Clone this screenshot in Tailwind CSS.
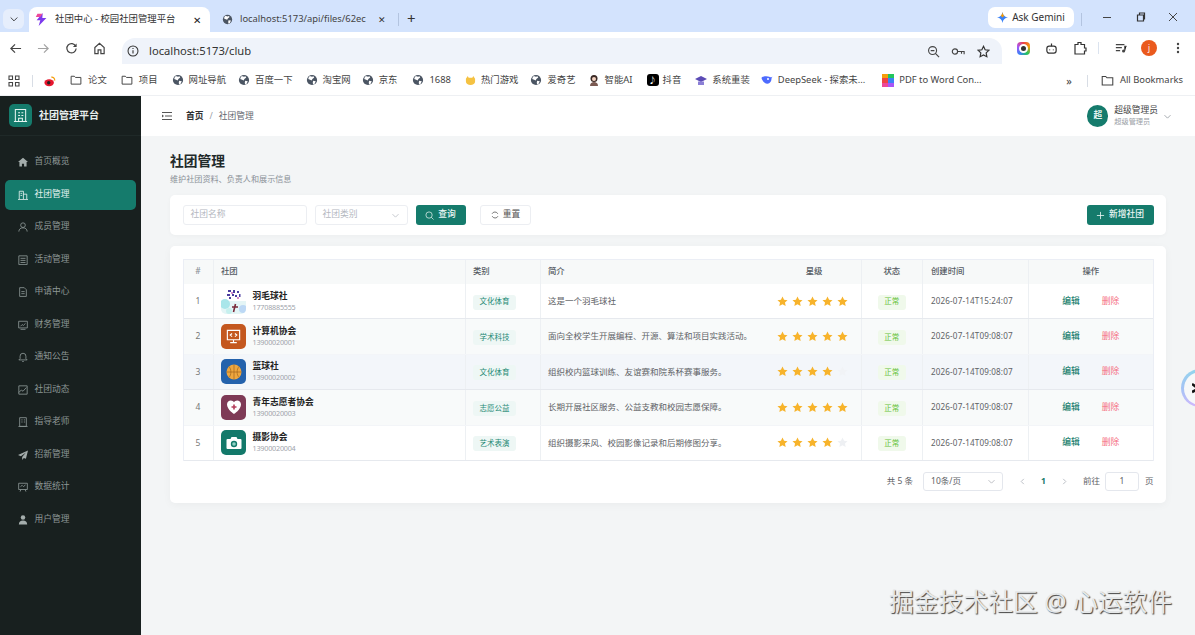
<!DOCTYPE html>
<html lang="zh">
<head>
<meta charset="utf-8">
<title>社团中心 - 校园社团管理平台</title>
<script src="https://cdn.jsdelivr.net/npm/@tailwindcss/browser@4"></script>
</head>
<body class="m-0 bg-white">
<svg class="hidden" xmlns="http://www.w3.org/2000/svg">
  <symbol id="star" viewBox="0 0 24 24"><path fill="currentColor" d="M12 1l3.400 7 7.600 1-5.600 5.300 1.500 7.700-6.900-3.800-6.900 3.800 1.500-7.700L1 9l7.600-1z"/></symbol>
  <symbol id="globe" viewBox="0 0 16 16"><circle cx="8" cy="8" r="6.800" fill="#4b5563"/><path fill="#fff" d="M5 2.500l3 1 2-.5 1 1.500-2.500 2-1 2-2-1-2.500-1 .5-2zM9.500 9l3.500.5-1.500 3.500-2 1-.5-2.500z"/></symbol>
  <symbol id="folder" viewBox="0 0 16 16"><path fill="none" stroke="#444" stroke-width="1.300" d="M1.500 3h4.300l1.500 1.600h7.200v8.900h-13z"/></symbol>
  <symbol id="chev" viewBox="0 0 12 12"><path fill="none" stroke="currentColor" stroke-width="1" d="M2 4.200l4 4 4-4"/></symbol>
</svg>
<div class="relative flex h-[635px] w-[1195px] flex-col overflow-hidden font-['Noto_Sans','Noto_Sans_CJK_SC',sans-serif]">

  <!-- tab strip -->
  <div class="flex h-[32px] shrink-0 items-end bg-[#d3e3fd] pl-[3px] text-[9.400px] text-[#333]">
    <div class="mb-[3px] flex h-[20px] w-[21px] items-center justify-center rounded-[6px] bg-[#e6eefc] text-[#222]"><svg class="h-[10px] w-[10px]"><use href="#chev"/></svg></div>
    <div class="ml-[5px] flex h-[25px] w-[181px] items-center rounded-t-[8px] bg-white pl-[6px] pr-[9px]">
      <svg class="h-[13px] w-[13px] shrink-0" viewBox="0 0 16 16"><path fill="#7c3aed" d="M9.500 0L2 9h4.500L4.500 16 14 6H9z"/><path fill="#ec4899" d="M3 1h6L6.500 5H1z"/></svg>
      <span class="ml-[7px] flex-1 whitespace-nowrap">社团中心 - 校园社团管理平台</span>
      <span class="ml-[4px] text-[10px] leading-none text-[#222]">✕</span>
    </div>
    <div class="flex h-[25px] w-[188px] items-center pl-[12px]">
      <svg class="h-[11px] w-[11px] shrink-0" viewBox="0 0 16 16"><use href="#globe"/></svg>
      <span class="ml-[7px] w-[128px] overflow-hidden whitespace-nowrap text-[#444]">localhost:5173/api/files/62ec</span>
      <span class="ml-[10px] text-[9px] leading-none text-[#333]">✕</span>
    </div>
    <div class="mb-[6px] h-[13px] w-px bg-[#b3c4e0]"></div>
    <div class="mb-[4px] ml-[8px] text-[15px] leading-[20px] text-[#333]">+</div>
    <div class="mb-[4px] ml-auto flex h-[21px] w-[86px] items-center justify-center rounded-[7px] bg-white text-[10px] text-[#333]">
      <svg class="mr-[4px] h-[11px] w-[11px]" viewBox="0 0 16 16"><path fill="#3b82f6" d="M8 0c.6 4.600 3.400 7.400 8 8-4.600.6-7.400 3.400-8 8-.6-4.600-3.400-7.400-8-8 4.600-.6 7.400-3.400 8-8z"/><path fill="#f59e0b" d="M8 0c.3 2.500 1 4 2.500 5.500L8 8 5.500 5.500C7 4 7.700 2.500 8 0z"/></svg>Ask Gemini
    </div>
    <div class="mb-[6px] ml-[7px] h-[13px] w-px bg-[#b3c4e0]"></div>
    <div class="mb-[5px] flex h-[20px] w-[113px] items-center text-[#444]">
      <svg class="ml-[20px] h-[10px] w-[10px]" viewBox="0 0 10 10"><path stroke="#444" d="M1 5.500h8"/></svg>
      <svg class="ml-[24px] h-[10px] w-[10px]" viewBox="0 0 10 10"><path fill="none" stroke="#333" stroke-width="1.200" d="M1.500 3h6v6h-6zM3.500 3V1h5v6H7.500"/></svg>
      <svg class="ml-[22px] h-[10px] w-[10px]" viewBox="0 0 10 10"><path stroke="#444" d="M1 1l8 8M9 1l-8 8"/></svg>
    </div>
  </div>

  <!-- toolbar -->
  <div class="flex h-[32px] shrink-0 items-center bg-white pl-[9px]">
    <svg class="h-[13px] w-[13px]" viewBox="0 0 14 14"><path fill="none" stroke="#444" stroke-width="1.300" d="M13 7H2M6.500 2.500L2 7l4.500 4.500"/></svg>
    <svg class="ml-[15px] h-[13px] w-[13px]" viewBox="0 0 14 14"><path fill="none" stroke="#a3a3a3" stroke-width="1.300" d="M1 7h11M7.500 2.500L12 7l-4.500 4.500"/></svg>
    <svg class="ml-[15px] h-[13px] w-[13px]" viewBox="0 0 14 14"><path fill="none" stroke="#444" stroke-width="1.300" d="M11.500 4.500A5 5 0 1 0 12 7"/><path fill="#444" d="M12.500 1.500v4h-4z"/></svg>
    <svg class="ml-[15px] h-[13px] w-[13px]" viewBox="0 0 14 14"><path fill="none" stroke="#444" stroke-width="1.300" d="M2 6l5-4.500L12 6v6.500H8.500V8.500h-3v4H2z"/></svg>
    <div class="ml-[16px] flex h-[26px] w-[880px] items-center self-end rounded-t-[13px] bg-[#eff3fa] pl-[5px] pr-[12px] text-[11.200px] text-[#333]">
      <svg class="h-[12px] w-[12px]" viewBox="0 0 14 14"><circle cx="7" cy="7" r="5.800" fill="none" stroke="#333" stroke-width="1.200"/><path stroke="#333" stroke-width="1.300" d="M7 6v4M7 3.500v1.300"/></svg>
      <span class="ml-[10px]">localhost:5173/club</span>
      <svg class="ml-auto h-[13px] w-[13px]" viewBox="0 0 14 14"><circle cx="6" cy="6" r="4.300" fill="none" stroke="#444" stroke-width="1.200"/><path stroke="#444" stroke-width="1.300" d="M9 9l4 4M4 6h4"/></svg>
      <svg class="ml-[11px] h-[13px] w-[14px]" viewBox="0 0 16 14"><circle cx="4.500" cy="7" r="3" fill="none" stroke="#444" stroke-width="1.300"/><path fill="none" stroke="#444" stroke-width="1.300" d="M7.500 7H15v3M12 7v2.500"/></svg>
      <svg class="ml-[12px] h-[13px] w-[13px]" viewBox="0 0 24 24"><path fill="none" stroke="#333" stroke-width="2.200" d="M12 2.500l3 6.400 7 .9-5.100 4.800 1.300 7-6.200-3.400-6.200 3.400 1.300-7L2 9.800l7-.9z"/></svg>
    </div>
    <div class="ml-[15px] h-[13px] w-[13px] rounded-[4px] bg-[conic-gradient(#ef4444,#f59e0b,#22c55e,#3b82f6,#a855f7,#ef4444)] p-[2px]"><div class="h-full w-full rounded-full border-[2px] border-white bg-[#333]"></div></div>
    <svg class="ml-[15px] h-[13px] w-[13px]" viewBox="0 0 14 14"><rect x="2" y="4.500" width="10" height="7.500" rx="2.500" fill="none" stroke="#333" stroke-width="1.300"/><path stroke="#333" stroke-width="1.300" d="M7 1.500v3M5 8v1M9 8v1"/></svg>
    <svg class="ml-[15px] h-[14px] w-[14px]" viewBox="0 0 14 14"><path fill="none" stroke="#333" stroke-width="1.200" d="M2 3.500h3V1.500h3v2h3.500V7h1.500v3h-1.500v3H2z"/></svg>
    <div class="ml-[11px] h-[12px] w-px bg-[#dbe3ef]"></div>
    <svg class="ml-[16px] h-[12px] w-[12px]" viewBox="0 0 14 14"><path stroke="#444" stroke-width="1.300" d="M1 3h10M1 6.500h7M1 10h5"/><circle cx="10" cy="10.500" r="1.800" fill="#444"/><path stroke="#444" stroke-width="1.200" d="M11.400 10.500V5h2"/></svg>
    <div class="ml-[14px] flex h-[16px] w-[16px] items-center justify-center rounded-full bg-[#ea5a1e] text-[8px] leading-none text-white">j</div>
    <svg class="ml-[19px] h-[12px] w-[4px]" viewBox="0 0 4 12"><circle cx="2" cy="2" r="1.200" fill="#444"/><circle cx="2" cy="6" r="1.200" fill="#444"/><circle cx="2" cy="10" r="1.200" fill="#444"/></svg>
  </div>

  <!-- bookmarks -->
  <div class="flex h-[32px] shrink-0 items-center border-b border-[#eef0f3] bg-white pt-[2px] pl-[8px] text-[9.400px] text-[#444]">
    <svg class="h-[12px] w-[12px]" viewBox="0 0 12 12"><path fill="none" stroke="#444" stroke-width="1.100" d="M1 1h3.500v3.500H1zM7.500 1H11v3.500H7.500zM1 7.500h3.500V11H1zM7.500 7.500H11V11H7.500z"/></svg>
    <div class="ml-[12px] h-[12px] w-px bg-[#d8dde5]"></div>
    <svg class="ml-[11px] h-[12px] w-[12px]" viewBox="0 0 14 14"><ellipse cx="6" cy="9" rx="5.500" ry="4" fill="#e6162d"/><circle cx="5.500" cy="9" r="2" fill="#222"/><path fill="none" stroke="#f59e0b" stroke-width="1.300" d="M8.500 2.500a3.500 3.500 0 0 1 4 4"/></svg>
    <div class="ml-[14px] flex items-center gap-[6px]"><svg class="h-[12px] w-[12px]"><use href="#folder"/></svg>论文</div>
    <div class="ml-[14px] flex items-center gap-[6px]"><svg class="h-[12px] w-[12px]"><use href="#folder"/></svg>项目</div>
    <div class="ml-[14px] flex items-center gap-[5px]"><svg class="h-[12px] w-[12px]"><use href="#globe"/></svg>网址导航</div>
    <div class="ml-[12px] flex items-center gap-[5px]"><svg class="h-[12px] w-[12px]"><use href="#globe"/></svg>百度一下</div>
    <div class="ml-[13px] flex items-center gap-[5px]"><svg class="h-[12px] w-[12px]"><use href="#globe"/></svg>淘宝网</div>
    <div class="ml-[11px] flex items-center gap-[5px]"><svg class="h-[12px] w-[12px]"><use href="#globe"/></svg>京东</div>
    <div class="ml-[15px] flex items-center gap-[5px]"><svg class="h-[12px] w-[12px]"><use href="#globe"/></svg>1688</div>
    <div class="ml-[14px] flex items-center gap-[5px]"><svg class="h-[11px] w-[11px]" viewBox="0 0 12 12"><path fill="#f5c242" d="M1 4l2-3 1 2h4l1-2 2 3v3a5 4 0 0 1-10 0z"/></svg>热门游戏</div>
    <div class="ml-[12px] flex items-center gap-[5px]"><svg class="h-[12px] w-[12px]"><use href="#globe"/></svg>爱奇艺</div>
    <div class="ml-[12px] flex items-center gap-[5px]"><svg class="h-[12px] w-[12px]" viewBox="0 0 12 12"><circle cx="6" cy="4.500" r="3.500" fill="#3b2a25"/><circle cx="6" cy="5" r="2" fill="#f3d2c1"/><path fill="#7b5a52" d="M2 12c0-3 2-4 4-4s4 1 4 4z"/></svg>智能AI</div>
    <div class="ml-[14px] flex items-center gap-[4px]"><div class="flex h-[12px] w-[12px] items-center justify-center rounded-[3px] bg-black text-[8px] leading-none text-white">♪</div>抖音</div>
    <div class="ml-[14px] flex items-center gap-[5px]"><svg class="h-[12px] w-[12px]" viewBox="0 0 12 12"><path fill="#5b4bb5" d="M6 2l6 3-6 3-6-3z"/><path fill="#8b7fd6" d="M3 7.500h6V11H3z"/></svg>系统重装</div>
    <div class="ml-[11px] flex items-center gap-[5px]"><svg class="h-[12px] w-[12px]" viewBox="0 0 12 12"><path fill="#4d6bfe" d="M11.500 2.500c-1 1-1.500 1-2.500.5C6 1.500 1.500 2 .5 4c1 4 5 7 8 5 1.500-1 2-3 2-4.500z"/><circle cx="7" cy="5" r="1" fill="#fff"/></svg>DeepSeek - 探索未...</div>
    <div class="ml-[17px] flex items-center gap-[5px]"><div class="grid h-[13px] w-[12px] grid-cols-2"><div class="bg-[#f59e0b]"></div><div class="bg-[#22c55e]"></div><div class="bg-[#ef4444]"></div><div class="bg-[#3b82f6]"></div><div class="bg-[#ec4899]"></div><div class="bg-[#a855f7]"></div></div>PDF to Word Con...</div>
    <div class="ml-auto text-[11px] leading-none">»</div>
    <div class="ml-[15px] h-[12px] w-px bg-[#d8dde5]"></div>
    <div class="ml-[13px] mr-[12px] flex items-center gap-[6px]"><svg class="h-[13px] w-[13px]"><use href="#folder"/></svg>All Bookmarks</div>
  </div>

  <!-- app -->
  <div class="flex min-h-0 flex-1">
    <aside class="flex w-[141px] shrink-0 flex-col bg-[#18201f] text-[8.750px] text-[#8d9796]">
      <div class="flex h-[40px] shrink-0 items-center border-b border-[#1f2928] pl-[9px]">
        <div class="flex h-[23px] w-[23px] items-center justify-center rounded-[5px] bg-[#157b6c]">
          <svg class="h-[15px] w-[15px]" viewBox="0 0 16 16"><path fill="none" stroke="#e6f5f2" stroke-width="1.100" d="M2.500 1.500h11v13h-11zM1 14.500h14M5.500 5h2M9 5h2M5.500 8h2M9 8h2M6 14.500v-3.500h4v3.500"/></svg>
        </div>
        <span class="ml-[7px] text-[10px] font-bold text-[#e8eeed]">社团管理平台</span>
      </div>
      <nav class="flex flex-col gap-[2.500px] px-[5px] pt-[11px]">
        <a class="flex h-[30px] items-center gap-[6.500px] rounded-[5px] pl-[13px]"><svg class="h-[10px] w-[10px]" viewBox="0 0 12 12"><path fill="#a4adac" d="M6 .8L12 6h-1.700v5.500H7.300V8H4.700v3.500H1.700V6H0z"/></svg>首页概览</a>
        <a class="flex h-[30px] items-center gap-[6.500px] rounded-[5px] bg-[#157b6c] pl-[13px] text-[#e7f3f1]"><svg class="h-[10px] w-[10px]" viewBox="0 0 12 12"><path fill="none" stroke="currentColor" d="M1.500 11V1.500h5V11M6.500 5h4v6M0 11.500h12M3 4h2M3 6.500h2"/></svg>社团管理</a>
        <a class="flex h-[30px] items-center gap-[6.500px] rounded-[5px] pl-[13px]"><svg class="h-[10px] w-[10px]" viewBox="0 0 12 12"><circle cx="6" cy="3.800" r="2.800" fill="none" stroke="currentColor"/><path fill="none" stroke="currentColor" d="M1 11.500c0-3 2.200-4.500 5-4.500s5 1.500 5 4.500"/></svg>成员管理</a>
        <a class="flex h-[30px] items-center gap-[6.500px] rounded-[5px] pl-[13px]"><svg class="h-[10px] w-[10px]" viewBox="0 0 12 12"><path fill="none" stroke="currentColor" d="M1 1h10v10.500H1zM3 4h6M3 6.500h6M3 9h6"/></svg>活动管理</a>
        <a class="flex h-[30px] items-center gap-[6.500px] rounded-[5px] pl-[13px]"><svg class="h-[10px] w-[10px]" viewBox="0 0 12 12"><path fill="none" stroke="currentColor" d="M2 .8h5.500L10 3.300v8H2zM4 5.500h4M4 8h4"/></svg>申请中心</a>
        <a class="flex h-[30px] items-center gap-[6.500px] rounded-[5px] pl-[13px]"><svg class="h-[10px] w-[10px]" viewBox="0 0 12 12"><path fill="none" stroke="currentColor" d="M.8 1.500h10.400v8H.8zM3 11.200h6M3 7.500l2-2 1.500 1L9 4"/></svg>财务管理</a>
        <a class="flex h-[30px] items-center gap-[6.500px] rounded-[5px] pl-[13px]"><svg class="h-[10px] w-[10px]" viewBox="0 0 12 12"><path fill="none" stroke="currentColor" d="M1 9.500h10L9.500 8V5a3.500 3.500 0 0 0-7 0v3zM5 11.500h2"/></svg>通知公告</a>
        <a class="flex h-[30px] items-center gap-[6.500px] rounded-[5px] pl-[13px]"><svg class="h-[10px] w-[10px]" viewBox="0 0 12 12"><path fill="none" stroke="currentColor" d="M1 1h10v10H1zM1 9l3-3 2 1.500L10 3"/></svg>社团动态</a>
        <a class="flex h-[30px] items-center gap-[6.500px] rounded-[5px] pl-[13px]"><svg class="h-[10px] w-[10px]" viewBox="0 0 12 12"><path fill="none" stroke="currentColor" d="M2 .8h8v10.400H2zM.5 11.500h11M4 3.500h1.500M7 3.500h1.500M4 6h1.500M7 6h1.500"/></svg>指导老师</a>
        <a class="flex h-[30px] items-center gap-[6.500px] rounded-[5px] pl-[13px]"><svg class="h-[10px] w-[10px]" viewBox="0 0 12 12"><path fill="#a4adac" d="M12 .5L0 6l3.500 1.500L9.500 3 5 8.500V12l2-2.500 2.500 1z"/></svg>招新管理</a>
        <a class="flex h-[30px] items-center gap-[6.500px] rounded-[5px] pl-[13px]"><svg class="h-[10px] w-[10px]" viewBox="0 0 12 12"><path fill="none" stroke="currentColor" d="M.8 1.500h10.400v7.500H.8zM3 5.500l2-1.500 1.500 1.500L9 3.500M3.500 9l-1 2.500M8.500 9l1 2.500"/></svg>数据统计</a>
        <a class="flex h-[30px] items-center gap-[6.500px] rounded-[5px] pl-[13px]"><svg class="h-[10px] w-[10px]" viewBox="0 0 12 12"><circle cx="6" cy="3" r="2.700" fill="#a4adac"/><path fill="#a4adac" d="M1 11.500c0-3.500 2-5 5-5s5 1.500 5 5z"/></svg>用户管理</a>
      </nav>
    </aside>

    <div class="flex min-w-0 flex-1 flex-col bg-[#f3f5f6]">
      <header class="flex h-[40px] shrink-0 items-center bg-white pl-[21px] pr-[23px]">
        <svg class="h-[10px] w-[10px]" viewBox="0 0 10 10"><path stroke="#555" d="M0 1.500h10M3 5h7M0 8.500h10"/><path fill="#555" d="M0 3.500v3l2-1.500z"/></svg>
        <span class="ml-[14px] pt-[1px] text-[8.750px] font-bold text-[#303133]">首页</span>
        <span class="ml-[6px] pt-[1px] text-[8.750px] text-[#9aa0a6]">/</span>
        <span class="ml-[6px] pt-[1px] text-[8.750px] text-[#5f6670]">社团管理</span>
        <div class="ml-auto flex h-[22px] w-[21px] items-center justify-center rounded-full bg-[#157b6c] text-[8.750px] font-bold text-[#e7f3f1]">超</div>
        <div class="ml-[6px] flex flex-col leading-[11px]">
          <span class="text-[8.750px] text-[#444]">超级管理员</span>
          <span class="text-[7.200px] text-[#9aa0a6]">超级管理员</span>
        </div>
        <svg class="ml-[5px] h-[9px] w-[9px] text-[#8a9097]"><use href="#chev"/></svg>
      </header>

      <main class="flex flex-1 flex-col px-[29px] pr-[29px]">
        <h1 class="mt-[15px] text-[13.750px] leading-[20px] font-bold text-[#1f2a2a]">社团管理</h1>
        <p class="mt-[2px] text-[8.100px] leading-[12px] text-[#8a9097]">维护社团资料、负责人和展示信息</p>

        <section class="mt-[10px] flex h-[40px] items-center rounded-[5px] bg-white pl-[12.500px] pr-[12.500px] shadow-[0_1px_4px_rgba(0,0,0,0.03)]">
          <div class="flex h-[20px] w-[124px] items-center rounded-[3px] border border-[#eceef2] pl-[7px] text-[8.750px] text-[#b4b8bf]">社团名称</div>
          <div class="ml-[8px] flex h-[20px] w-[93px] items-center justify-between rounded-[3px] border border-[#eceef2] px-[7px] text-[8.750px] text-[#b4b8bf]">社团类别<svg class="h-[9px] w-[9px]"><use href="#chev"/></svg></div>
          <button class="ml-[8px] flex h-[20px] w-[50px] items-center justify-center gap-[4px] rounded-[3px] bg-[#157b6c] text-[8.750px] font-medium text-[#eaf5f3]"><svg class="h-[9px] w-[9px]" viewBox="0 0 10 10"><circle cx="4.500" cy="4.500" r="3.500" fill="none" stroke="currentColor" stroke-width=".8"/><path stroke="currentColor" stroke-width=".8" d="M7 7l2.500 2.500"/></svg>查询</button>
          <button class="ml-[14.500px] flex h-[20px] w-[51px] items-center justify-center gap-[4px] rounded-[3px] border border-[#eceef2] bg-white text-[8.750px] text-[#555]"><svg class="h-[8px] w-[8px]" viewBox="0 0 10 10"><path fill="none" stroke="currentColor" d="M8.500 3.500A4 4 0 0 0 1.300 3.500M1.500 6.500a4 4 0 0 0 7.200 0"/></svg>重置</button>
          <button class="ml-auto flex h-[20px] w-[67px] items-center justify-center gap-[4px] rounded-[3px] bg-[#157b6c] text-[8.750px] font-medium text-[#eaf5f3]"><svg class="h-[9px] w-[9px]" viewBox="0 0 10 10"><path stroke="currentColor" stroke-width=".9" d="M5 1v8M1 5h8"/></svg>新增社团</button>
        </section>

        <section class="mt-[11px] h-[257px] rounded-[5px] bg-white px-[12.500px] pt-[12.500px] shadow-[0_2px_8px_rgba(0,0,0,0.04)]">
          <div class="border border-b-0 border-[#ebeef5] text-[8.500px] text-[#606266]">
            <!-- head -->
            <div class="grid h-[24.500px] grid-cols-[30px_252px_75px_227px_94px_61.500px_106px_1fr] items-center bg-[#f7f9f9] text-[8.400px] font-medium text-[#555b63]">
              <div class="flex h-full items-center justify-center border-r border-[#edf0f3] text-[#8a9097]">#</div>
              <div class="flex h-full items-center border-r border-[#edf0f3] pl-[7.500px]">社团</div>
              <div class="flex h-full items-center border-r border-[#edf0f3] pl-[7.500px]">类别</div>
              <div class="flex h-full items-center pl-[7.500px]">简介</div>
              <div class="flex h-full items-center justify-center border-r border-[#edf0f3]">星级</div>
              <div class="flex h-full items-center justify-center border-r border-[#edf0f3]">状态</div>
              <div class="flex h-full items-center border-r border-[#edf0f3] pl-[8px]">创建时间</div>
              <div class="flex h-full items-center justify-center">操作</div>
            </div>

            <!-- row 1 -->
            <div class="grid h-[35.200px] grid-cols-[30px_252px_75px_227px_94px_61.500px_106px_1fr] items-center border-b border-[#e6e9ee] bg-white">
              <div class="flex h-full items-center justify-center border-r border-[#edf0f3] text-[#777]">1</div>
              <div class="flex h-full items-center gap-[6.500px] border-r border-[#edf0f3] pl-[7.500px]">
                <svg class="h-[25px] w-[25px] shrink-0 overflow-hidden rounded-[5px]" viewBox="0 0 25 25"><rect width="25" height="25" fill="#ffffff"/><rect y="12" width="25" height="13" fill="#e4f5f6"/><circle cx="4" cy="15" r="5" fill="#a9e6ea"/><circle cx="22" cy="20" r="4" fill="#bcd8f5"/><circle cx="8" cy="22" r="3" fill="#c6f0ee"/><path fill="#4c3fa0" d="M7 1h3v2H7zM12 1h2v3h-2zM16 2h2v2h-2zM6 5h3v2H6zM11 5h2v2h-2zM14 6h2v2h-2zM18 5h1.500v3H18zM8 8h2v2H8z"/><path fill="#d58ac9" d="M10 3h2v2h-2zM16 8h2v2h-2z"/><path stroke="#7a2a3a" stroke-width="1.600" d="M14.500 15l-2 8M11 18h6"/></svg>
                <div class="flex flex-col"><span class="text-[8.750px] leading-[12px] font-bold text-[#222]">羽毛球社</span><span class="text-[7.200px] leading-[11px] tracking-[-0.2px] text-[#a0a4ab]">17708885555</span></div>
              </div>
              <div class="flex h-full items-center border-r border-[#edf0f3] pl-[7.500px]"><span class="mt-[2px] flex h-[15px] w-[43px] items-center justify-center rounded-[3px] bg-[#eef7f5] text-[7.500px] text-[#1f8a76]">文化体育</span></div>
              <div class="flex h-full items-center truncate pl-[7.500px]">这是一个羽毛球社</div>
              <div class="flex h-full items-center justify-center gap-[4px] border-r border-[#edf0f3] pr-[3px] text-[#f7b32b]"><svg class="h-[11px] w-[11px]"><use href="#star"/></svg><svg class="h-[11px] w-[11px]"><use href="#star"/></svg><svg class="h-[11px] w-[11px]"><use href="#star"/></svg><svg class="h-[11px] w-[11px]"><use href="#star"/></svg><svg class="h-[11px] w-[11px]"><use href="#star"/></svg></div>
              <div class="flex h-full items-center justify-center border-r border-[#edf0f3]"><span class="mt-[2px] flex h-[15px] w-[28px] items-center justify-center rounded-[3px] bg-[#f0f9eb] text-[7.500px] text-[#67c23a]">正常</span></div>
              <div class="flex h-full items-center border-r border-[#edf0f3] pl-[8px] text-[8.100px] tracking-[0.15px]">2026-07-14T15:24:07</div>
              <div class="flex h-full items-center justify-center gap-[22px] text-[8.750px]"><span class="font-medium text-[#1c7f70]">编辑</span><span class="text-[#f56c7c]">删除</span></div>
            </div>

            <!-- row 2 -->
            <div class="grid h-[35.500px] grid-cols-[30px_252px_75px_227px_94px_61.500px_106px_1fr] items-center border-b border-[#f3f5f8] bg-[#f8fafa]">
              <div class="flex h-full items-center justify-center border-r border-[#edf0f3] text-[#777]">2</div>
              <div class="flex h-full items-center gap-[6.500px] border-r border-[#edf0f3] pl-[7.500px]">
                <div class="flex h-[25px] w-[25px] shrink-0 items-center justify-center rounded-[5px] bg-[#c4581f]"><svg class="h-[17px] w-[17px]" viewBox="0 0 18 18"><path fill="none" stroke="#fff" stroke-width="1.200" d="M2.500 2.500h13v10h-13zM9 12.500V15M5.500 15.500h7M7.500 5.800L5.500 7.500l2 1.700M10.500 5.800l2 1.700-2 1.700"/></svg></div>
                <div class="flex flex-col"><span class="text-[8.750px] leading-[12px] font-bold text-[#222]">计算机协会</span><span class="text-[7.200px] leading-[11px] tracking-[-0.2px] text-[#a0a4ab]">13900020001</span></div>
              </div>
              <div class="flex h-full items-center border-r border-[#edf0f3] pl-[7.500px]"><span class="mt-[2px] flex h-[15px] w-[43px] items-center justify-center rounded-[3px] bg-[#eef7f5] text-[7.500px] text-[#1f8a76]">学术科技</span></div>
              <div class="flex h-full items-center truncate pl-[7.500px]">面向全校学生开展编程、开源、算法和项目实践活动。</div>
              <div class="flex h-full items-center justify-center gap-[4px] border-r border-[#edf0f3] pr-[3px] text-[#f7b32b]"><svg class="h-[11px] w-[11px]"><use href="#star"/></svg><svg class="h-[11px] w-[11px]"><use href="#star"/></svg><svg class="h-[11px] w-[11px]"><use href="#star"/></svg><svg class="h-[11px] w-[11px]"><use href="#star"/></svg><svg class="h-[11px] w-[11px]"><use href="#star"/></svg></div>
              <div class="flex h-full items-center justify-center border-r border-[#edf0f3]"><span class="mt-[2px] flex h-[15px] w-[28px] items-center justify-center rounded-[3px] bg-[#f0f9eb] text-[7.500px] text-[#67c23a]">正常</span></div>
              <div class="flex h-full items-center border-r border-[#edf0f3] pl-[8px] text-[8.100px] tracking-[0.15px]">2026-07-14T09:08:07</div>
              <div class="flex h-full items-center justify-center gap-[22px] text-[8.750px]"><span class="font-medium text-[#1c7f70]">编辑</span><span class="text-[#f56c7c]">删除</span></div>
            </div>

            <!-- row 3 -->
            <div class="grid h-[35.500px] grid-cols-[30px_252px_75px_227px_94px_61.500px_106px_1fr] items-center border-b border-[#e6e9ee] bg-[#f3f6fa]">
              <div class="flex h-full items-center justify-center border-r border-[#edf0f3] text-[#777]">3</div>
              <div class="flex h-full items-center gap-[6.500px] border-r border-[#edf0f3] pl-[7.500px]">
                <div class="flex h-[25px] w-[25px] shrink-0 items-center justify-center rounded-[5px] bg-[#2462ac]"><svg class="h-[16px] w-[16px]" viewBox="0 0 16 16"><circle cx="8" cy="8" r="7.500" fill="#eea73f"/><path fill="none" stroke="#a3641b" stroke-width=".7" d="M8 .5v15M.5 8h15M3 2.500c2.500 3 2.500 8 0 11M13 2.500c-2.500 3-2.500 8 0 11"/></svg></div>
                <div class="flex flex-col"><span class="text-[8.750px] leading-[12px] font-bold text-[#222]">篮球社</span><span class="text-[7.200px] leading-[11px] tracking-[-0.2px] text-[#a0a4ab]">13900020002</span></div>
              </div>
              <div class="flex h-full items-center border-r border-[#edf0f3] pl-[7.500px]"><span class="mt-[2px] flex h-[15px] w-[43px] items-center justify-center rounded-[3px] bg-[#eef7f5] text-[7.500px] text-[#1f8a76]">文化体育</span></div>
              <div class="flex h-full items-center truncate pl-[7.500px]">组织校内篮球训练、友谊赛和院系杯赛事服务。</div>
              <div class="flex h-full items-center justify-center gap-[4px] border-r border-[#edf0f3] pr-[3px] text-[#f7b32b]"><svg class="h-[11px] w-[11px]"><use href="#star"/></svg><svg class="h-[11px] w-[11px]"><use href="#star"/></svg><svg class="h-[11px] w-[11px]"><use href="#star"/></svg><svg class="h-[11px] w-[11px]"><use href="#star"/></svg><svg class="h-[11px] w-[11px] text-[#f1f3f6]"><use href="#star"/></svg></div>
              <div class="flex h-full items-center justify-center border-r border-[#edf0f3]"><span class="mt-[2px] flex h-[15px] w-[28px] items-center justify-center rounded-[3px] bg-[#f0f9eb] text-[7.500px] text-[#67c23a]">正常</span></div>
              <div class="flex h-full items-center border-r border-[#edf0f3] pl-[8px] text-[8.100px] tracking-[0.15px]">2026-07-14T09:08:07</div>
              <div class="flex h-full items-center justify-center gap-[22px] text-[8.750px]"><span class="font-medium text-[#1c7f70]">编辑</span><span class="text-[#f56c7c]">删除</span></div>
            </div>

            <!-- row 4 -->
            <div class="grid h-[35.500px] grid-cols-[30px_252px_75px_227px_94px_61.500px_106px_1fr] items-center border-b border-[#f3f5f8] bg-[#f8fafa]">
              <div class="flex h-full items-center justify-center border-r border-[#edf0f3] text-[#777]">4</div>
              <div class="flex h-full items-center gap-[6.500px] border-r border-[#edf0f3] pl-[7.500px]">
                <div class="flex h-[25px] w-[25px] shrink-0 items-center justify-center rounded-[5px] bg-[#7e3a56]"><svg class="h-[16px] w-[16px]" viewBox="0 0 16 16"><path fill="#fff" d="M8 15S1 10.500 1 5.500C1 3 3 1.500 4.800 1.500 6.300 1.500 7.300 2.300 8 3.300c.7-1 1.700-1.800 3.200-1.800C13 1.500 15 3 15 5.500 15 10.500 8 15 8 15z"/><path stroke="#b43d5b" stroke-width="1.600" d="M8 5.500v5M5.500 8h5"/></svg></div>
                <div class="flex flex-col"><span class="text-[8.750px] leading-[12px] font-bold text-[#222]">青年志愿者协会</span><span class="text-[7.200px] leading-[11px] tracking-[-0.2px] text-[#a0a4ab]">13900020003</span></div>
              </div>
              <div class="flex h-full items-center border-r border-[#edf0f3] pl-[7.500px]"><span class="mt-[2px] flex h-[15px] w-[43px] items-center justify-center rounded-[3px] bg-[#eef7f5] text-[7.500px] text-[#1f8a76]">志愿公益</span></div>
              <div class="flex h-full items-center truncate pl-[7.500px]">长期开展社区服务、公益支教和校园志愿保障。</div>
              <div class="flex h-full items-center justify-center gap-[4px] border-r border-[#edf0f3] pr-[3px] text-[#f7b32b]"><svg class="h-[11px] w-[11px]"><use href="#star"/></svg><svg class="h-[11px] w-[11px]"><use href="#star"/></svg><svg class="h-[11px] w-[11px]"><use href="#star"/></svg><svg class="h-[11px] w-[11px]"><use href="#star"/></svg><svg class="h-[11px] w-[11px]"><use href="#star"/></svg></div>
              <div class="flex h-full items-center justify-center border-r border-[#edf0f3]"><span class="mt-[2px] flex h-[15px] w-[28px] items-center justify-center rounded-[3px] bg-[#f0f9eb] text-[7.500px] text-[#67c23a]">正常</span></div>
              <div class="flex h-full items-center border-r border-[#edf0f3] pl-[8px] text-[8.100px] tracking-[0.15px]">2026-07-14T09:08:07</div>
              <div class="flex h-full items-center justify-center gap-[22px] text-[8.750px]"><span class="font-medium text-[#1c7f70]">编辑</span><span class="text-[#f56c7c]">删除</span></div>
            </div>

            <!-- row 5 -->
            <div class="grid h-[35.500px] grid-cols-[30px_252px_75px_227px_94px_61.500px_106px_1fr] items-center border-b border-[#e6e9ee] bg-white">
              <div class="flex h-full items-center justify-center border-r border-[#edf0f3] text-[#777]">5</div>
              <div class="flex h-full items-center gap-[6.500px] border-r border-[#edf0f3] pl-[7.500px]">
                <div class="flex h-[25px] w-[25px] shrink-0 items-center justify-center rounded-[5px] bg-[#13796a]"><svg class="h-[18px] w-[18px]" viewBox="0 0 18 18"><path fill="#fff" d="M2.500 5h3l1-2h5l1 2h3a1 1 0 0 1 1 1v8a1 1 0 0 1-1 1h-13a1 1 0 0 1-1-1V6a1 1 0 0 1 1-1z"/><circle cx="9" cy="10" r="3.200" fill="#13796a"/><circle cx="9" cy="10" r="1.800" fill="#8fd0c4"/></svg></div>
                <div class="flex flex-col"><span class="text-[8.750px] leading-[12px] font-bold text-[#222]">摄影协会</span><span class="text-[7.200px] leading-[11px] tracking-[-0.2px] text-[#a0a4ab]">13900020004</span></div>
              </div>
              <div class="flex h-full items-center border-r border-[#edf0f3] pl-[7.500px]"><span class="mt-[2px] flex h-[15px] w-[43px] items-center justify-center rounded-[3px] bg-[#eef7f5] text-[7.500px] text-[#1f8a76]">艺术表演</span></div>
              <div class="flex h-full items-center truncate pl-[7.500px]">组织摄影采风、校园影像记录和后期修图分享。</div>
              <div class="flex h-full items-center justify-center gap-[4px] border-r border-[#edf0f3] pr-[3px] text-[#f7b32b]"><svg class="h-[11px] w-[11px]"><use href="#star"/></svg><svg class="h-[11px] w-[11px]"><use href="#star"/></svg><svg class="h-[11px] w-[11px]"><use href="#star"/></svg><svg class="h-[11px] w-[11px]"><use href="#star"/></svg><svg class="h-[11px] w-[11px] text-[#eef0f3]"><use href="#star"/></svg></div>
              <div class="flex h-full items-center justify-center border-r border-[#edf0f3]"><span class="mt-[2px] flex h-[15px] w-[28px] items-center justify-center rounded-[3px] bg-[#f0f9eb] text-[7.500px] text-[#67c23a]">正常</span></div>
              <div class="flex h-full items-center border-r border-[#edf0f3] pl-[8px] text-[8.100px] tracking-[0.15px]">2026-07-14T09:08:07</div>
              <div class="flex h-full items-center justify-center gap-[22px] text-[8.750px]"><span class="font-medium text-[#1c7f70]">编辑</span><span class="text-[#f56c7c]">删除</span></div>
            </div>
          </div>

          <!-- pagination -->
          <div class="mt-[10.500px] flex h-[19px] items-center justify-end text-[8.500px] text-[#606266]">
            <span>共 5 条</span>
            <div class="ml-[10px] flex h-[19px] w-[80px] items-center justify-between rounded-[3px] border border-[#e4e7ed] pl-[7px] pr-[6px]">10条/页<svg class="h-[9px] w-[9px] text-[#a8abb2]"><use href="#chev"/></svg></div>
            <svg class="ml-[16px] h-[7px] w-[7px]" viewBox="0 0 8 8"><path fill="none" stroke="#b4b8bf" d="M5.500 1L2.500 4l3 3"/></svg>
            <span class="ml-[15px] font-bold text-[#157b6c]">1</span>
            <svg class="ml-[15px] h-[7px] w-[7px]" viewBox="0 0 8 8"><path fill="none" stroke="#b4b8bf" d="M2.500 1l3 3-3 3"/></svg>
            <span class="ml-[15px]">前往</span>
            <div class="ml-[5px] flex h-[19px] w-[34px] items-center justify-center rounded-[3px] border border-[#e4e7ed]">1</div>
            <span class="ml-[6px]">页</span>
          </div>
        </section>
      </main>
    </div>
  </div>

  <!-- floating badge -->
  <div class="absolute top-[369px] left-[1181px] flex h-[38px] w-[38px] items-center justify-center rounded-full bg-[conic-gradient(#8fd8ea,#a5c4f5,#d8b4fe,#a5c4f5,#8fd8ea)]">
    <div class="flex h-[33px] w-[33px] items-center rounded-full bg-[#f7f8f9] pl-[8px]"><svg class="h-[14px] w-[10px]" viewBox="0 0 10 14"><path fill="none" stroke="#111" stroke-width="2.600" d="M0 3l5 3.500M0 11l6-3"/></svg></div>
  </div>

  <!-- watermark -->
  <div class="absolute top-[585px] left-[889px] text-[24.800px] leading-[32px] whitespace-nowrap text-[#e6e8e9] [text-shadow:1px_1px_1px_#444]">掘金技术社区 @ 心运软件</div>
</div>
</body>
</html>
